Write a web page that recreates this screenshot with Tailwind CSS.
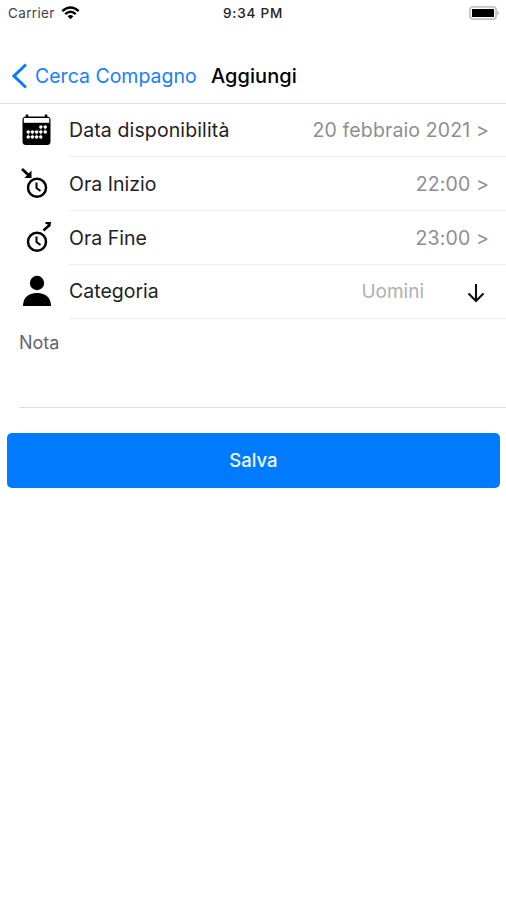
<!DOCTYPE html>
<html lang="it">
<head>
<meta charset="utf-8">
<title>Aggiungi</title>
<script src="https://cdn.jsdelivr.net/npm/@tailwindcss/browser@4"></script>
</head>
<body class="h-[900px] w-[506px] overflow-hidden bg-white font-[Inter,sans-serif] text-[19.5px] text-[#222] [font-feature-settings:'calt'_0]">
<header class="h-[104px] border-b border-[#dedede]">
  <div class="grid h-[27px] grid-cols-3 items-center px-2 text-[13px] text-[#444]">
    <div class="flex items-center gap-[6px]"><span class="w-[47px] text-[13.5px] tracking-[0.35px]">Carrier</span>
      <svg class="mb-[2px] h-[14px] w-[19px]" viewBox="0 0 19 14" fill="none" stroke="#000" stroke-width="2.4"><path d="M1.3 5.1Q9.5-2.1 17.7 5.1M4.2 8.2Q9.5 3.5 14.8 8.2"/><path d="M6.6 10.2Q9.5 7.9 12.4 10.2L9.5 13.2Z" fill="#000" stroke="none"/></svg>
    </div>
    <div class="text-center text-[13.5px] font-medium tracking-[0.8px] whitespace-nowrap text-[#222]">9:34 PM</div>
    <svg class="mr-[-2px] mb-[1px] h-[14px] w-[31px] justify-self-end" viewBox="0 0 31 14"><rect x=".9" y=".9" width="26.2" height="12.2" rx="3" fill="#fff" stroke="#c4c4c4" stroke-width="1.8"/><rect x="3" y="3" width="22" height="8" rx=".5"/><path d="M28.3 4.5Q31.5 7 28.3 9.5Z" fill="#b5b5b5"/></svg>
  </div>
  <nav class="flex h-[76px] items-center pt-[22px] pl-3">
    <svg class="h-[26px] w-[15px]" viewBox="0 0 15 26" fill="none" stroke="#087cff" stroke-width="3"><path d="M14 1.5 2 13 14 24.5"/></svg>
    <a class="ml-2 w-[176px] pt-[2px] text-[19.5px] whitespace-nowrap text-[#1780ff]">Cerca Compagno</a>
    <h1 class="pb-px text-[20px] font-medium tracking-[0.06px] whitespace-nowrap text-black">Aggiungi</h1>
  </nav>
</header>
<main>
  <section class="flex h-[53px] pl-[21px]">
    <svg class="mt-[10px] h-[32px] w-[31px]" viewBox="0 0 31 32"><rect x="1.5" y="2.5" width="28" height="28.5" rx="3.5"/><path d="M2.8 4H28.2V8.8H2.8Z" fill="#fff"/><path d="M6 .5V4M25 .5V4" stroke="#000" stroke-width="2.5"/><path d="M7.5 17.5H24.5M7.5 22.5H20M19.8 12.5H24.5M7.5 17.5V22.5M11.6 17.5V22.5M15.7 17.5V22.5M19.8 12.5V22.5M24 12.5V17.5" stroke="#777" stroke-width=".7"/><g fill="#fff"><circle cx="19.8" cy="13" r="1.7"/><circle cx="24.3" cy="13" r="1.7"/><circle cx="7.2" cy="18" r="1.7"/><circle cx="11.4" cy="18" r="1.7"/><circle cx="15.6" cy="18" r="1.7"/><circle cx="19.8" cy="18" r="1.7"/><circle cx="24.3" cy="18" r="1.7"/><circle cx="7.2" cy="23" r="1.7"/><circle cx="11.4" cy="23" r="1.7"/><circle cx="15.6" cy="23" r="1.7"/><circle cx="19.8" cy="23" r="1.7"/></g></svg>
    <div class="ml-[17px] flex flex-1 items-center justify-between border-b border-[#eee] pt-[2px] pr-[17px]"><span class="tracking-[0.12px]">Data disponibilità</span><span class="tracking-[0.13px] text-[#8e8e8e]">20 febbraio 2021 &gt;</span></div>
  </section>
  <section class="flex h-[54px] pl-[21px]">
    <svg class="mt-[10px] h-[32px] w-[31px]" viewBox="0 0 31 32" fill="none" stroke="#000"><circle cx="16" cy="20.7" r="9" stroke-width="2.5"/><path d="M15.5 15.5V21L19.5 24" stroke-width="2"/><path d="M1 2 8.5 9" stroke-width="2.8"/><path d="M10.5 3.5V11H3.5Z" fill="#000" stroke="none"/></svg>
    <div class="ml-[17px] flex flex-1 items-center justify-between border-b border-[#eee] pt-[2px] pr-[17px]"><span>Ora Inizio</span><span class="tracking-[0.12px] text-[#8e8e8e]">22:00 &gt;</span></div>
  </section>
  <section class="flex h-[54px] pl-[21px]">
    <svg class="mt-[10px] h-[32px] w-[31px]" viewBox="0 0 31 32" fill="none" stroke="#000"><circle cx="16" cy="20.7" r="9" stroke-width="2.5"/><path d="M15.5 15.5V21L19.5 24" stroke-width="2"/><path d="M22.5 9.5 28 4.5" stroke-width="2.4"/><path d="M24.5 1H30L29.5 5.5 27 6.5V3.5L24.5 3Z" fill="#000" stroke="none"/></svg>
    <div class="ml-[17px] flex flex-1 items-center justify-between border-b border-[#eee] pt-[2px] pr-[17px]"><span>Ora Fine</span><span class="tracking-[0.12px] text-[#8e8e8e]">23:00 &gt;</span></div>
  </section>
  <section class="flex h-[54px] pl-[21px]">
    <svg class="mt-[10px] h-[32px] w-[31px]" viewBox="0 0 31 32"><circle cx="16" cy="8" r="7.2"/><path d="M2 31C2 23 7 18 16 18S30 23 30 31Z"/></svg>
    <div class="ml-[17px] flex flex-1 items-center border-b border-[#eee] pt-px pr-[21px]"><span>Categoria</span><span class="ml-auto text-[19px] text-[#b0b0b0]">Uomini</span>
      <svg class="mt-px ml-[43px] h-[20px] w-[18px]" viewBox="0 0 18 20" fill="none" stroke="#111" stroke-width="2.1"><path d="M9 1V18M1.5 10.5 9 18l7.5-7.5"/></svg></div>
  </section>
  <section class="ml-[19px] h-[89px] border-b border-[#ddd] pt-[10px] text-[18px] text-[#666]">Nota</section>
  <button class="mt-[25px] ml-[7px] flex h-[55px] w-[493px] items-center justify-center rounded-[5px] bg-[#007aff] pt-px text-[18.5px] font-medium text-[#edf6ff]">Salva</button>
</main>
</body>
</html>
